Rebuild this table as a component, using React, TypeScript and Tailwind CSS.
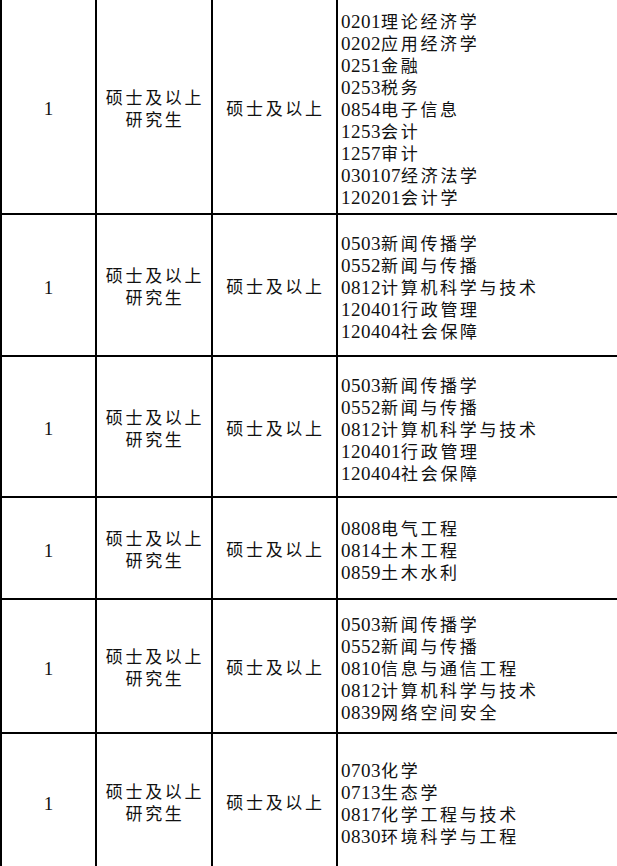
import React from 'react';

type Row = {
  height: string;
  majors: string[];
};

// 每行的高度取自截图里横线的位置
const rows: Row[] = [
  {
    height: 'h-[215px]',
    majors: [
      '0201理论经济学',
      '0202应用经济学',
      '0251金融',
      '0253税务',
      '0854电子信息',
      '1253会计',
      '1257审计',
      '030107经济法学',
      '120201会计学',
    ],
  },
  {
    height: 'h-[142px]',
    majors: ['0503新闻传播学', '0552新闻与传播', '0812计算机科学与技术', '120401行政管理', '120404社会保障'],
  },
  {
    height: 'h-[141px]',
    majors: ['0503新闻传播学', '0552新闻与传播', '0812计算机科学与技术', '120401行政管理', '120404社会保障'],
  },
  {
    height: 'h-[102px]',
    majors: ['0808电气工程', '0814土木工程', '0859土木水利'],
  },
  {
    height: 'h-[134px]',
    majors: ['0503新闻传播学', '0552新闻与传播', '0810信息与通信工程', '0812计算机科学与技术', '0839网络空间安全'],
  },
  {
    height: 'h-[136px]',
    majors: ['0703化学', '0713生态学', '0817化学工程与技术', '0830环境科学与工程'],
  },
];

const Cjk: React.FC<{ children: React.ReactNode }> = ({ children }) => (
  <span className="text-[17px] leading-[22px] tracking-[2.7px]">{children}</span>
);

const Line: React.FC<{ children: React.ReactNode }> = ({ children }) => (
  <div className="h-[22px] whitespace-nowrap leading-[22px]">{children}</div>
);

const Major: React.FC<{ text: string }> = ({ text }) => {
  const m = text.match(/^(\d+)(.*)$/);
  const code = m ? m[1] : '';
  const name = m ? m[2] : text;
  return (
    <Line>
      <span className="text-[19px] leading-[22px] tracking-[0.5px]">{code}</span>
      <Cjk>{name}</Cjk>
    </Line>
  );
};

const App: React.FC = () => {
  return (
    <div
      className="w-[617px] h-[866px] overflow-hidden bg-white text-[#111]"
      style={{ fontFamily: '"Liberation Serif", "Noto Sans CJK SC", serif' }}
    >
      <div className="w-[700px]">
        {rows.map((row, i) => (
          <div key={i} className={`grid grid-cols-[95px_116px_125px_1fr] border-b-2 border-black ${row.height}`}>
            <div className="flex items-center justify-center border-l-2 border-black pt-[5px]">
              <Line>
                <span className="text-[19px]">1</span>
              </Line>
            </div>
            <div className="flex flex-col items-center justify-center border-l-2 border-black pt-[6px] pl-[2px]">
              <Line><Cjk>硕士及以上</Cjk></Line>
              <Line><Cjk>研究生</Cjk></Line>
            </div>
            <div className="flex flex-col items-center justify-center border-l-2 border-black pt-[6px] pl-[2px]">
              <Line><Cjk>硕士及以上</Cjk></Line>
            </div>
            <div className="flex flex-col justify-center border-l-2 border-black pt-[6px] pl-[3px]">
              {row.majors.map((m) => (
                <Major key={m} text={m} />
              ))}
            </div>
          </div>
        ))}
      </div>
    </div>
  );
};

export default App;
